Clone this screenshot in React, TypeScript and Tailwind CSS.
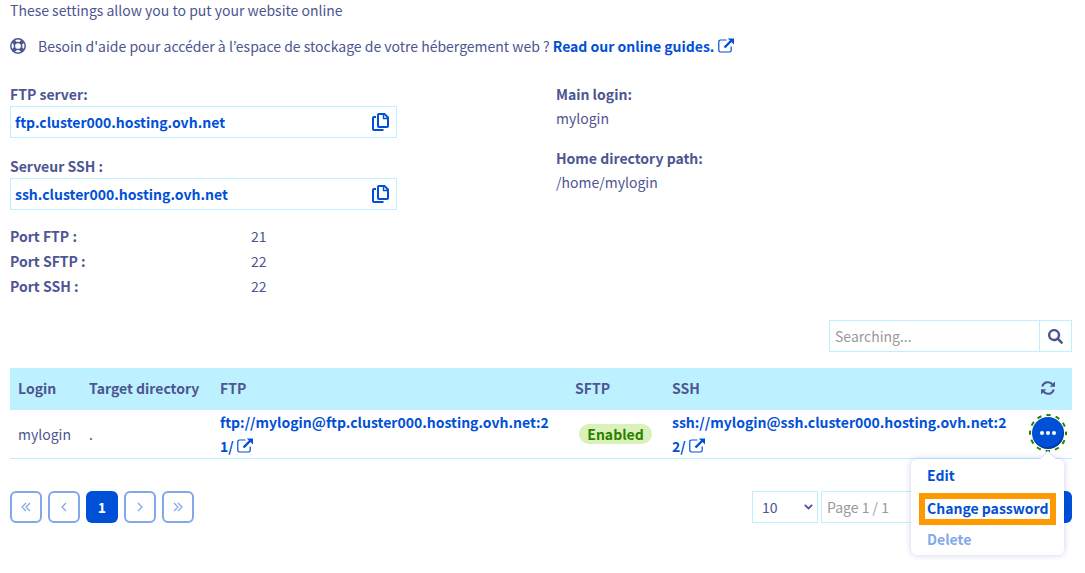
import React from 'react';
import { FaSearch } from 'react-icons/fa';

const ports = [
  { label: 'Port FTP :', value: '21' },
  { label: 'Port SFTP :', value: '22' },
  { label: 'Port SSH :', value: '22' },
];

function HelpIcon() {
  return (
    <svg className="h-4 w-4 shrink-0" viewBox="0 0 16 16" fill="none" stroke="currentColor" aria-hidden="true">
      <circle cx="8" cy="8" r="7.2" strokeWidth="1.5" />
      <circle cx="8" cy="8" r="3.6" strokeWidth="1.5" />
      <path d="M3 3l2.6 2.6M13 3l-2.6 2.6M3 13l2.6-2.6M13 13l-2.6-2.6" strokeWidth="4" />
    </svg>
  );
}

function ExternalIcon() {
  return (
    <svg className="inline-block h-4 w-4 align-[-2px]" viewBox="0 0 16 16" fill="none" stroke="currentColor" aria-hidden="true">
      <path d="M8.5 2H2.5A1.7 1.7 0 0 0 .8 3.7v8.6A1.7 1.7 0 0 0 2.5 14h9a1.7 1.7 0 0 0 1.7-1.7V8.5" strokeWidth="1.2" />
      <path d="M6.5 9.5L13 3" strokeWidth="2.4" />
      <path d="M9.8 0.4H16v6.2z" fill="currentColor" stroke="none" />
    </svg>
  );
}

function CopyIcon() {
  return (
    <svg className="h-[18px] w-[17px]" viewBox="0 0 17 18" fill="none" stroke="currentColor" strokeWidth="2" aria-hidden="true">
      <path d="M6 2a1 1 0 0 1 1-1h5.5L16 4.5V13a1 1 0 0 1-1 1H7a1 1 0 0 1-1-1z" />
      <path d="M11.5 1v4.5H16" strokeWidth="1.4" />
      <path d="M4 4H2a1 1 0 0 0-1 1v11a1 1 0 0 0 1 1h9.5" />
    </svg>
  );
}

function RefreshIcon() {
  return (
    <svg className="h-[14px] w-[14px]" viewBox="0 0 14 14" fill="none" stroke="currentColor" strokeWidth="2" aria-hidden="true">
      <path d="M1.3 5.6A5.8 5.8 0 0 1 11.6 3.6" />
      <path d="M12.7 8.4A5.8 5.8 0 0 1 2.4 10.4" />
      <path d="M14 .5v5.3H8.7zM0 13.5V8.2h5.3z" fill="currentColor" stroke="none" />
    </svg>
  );
}

function CopyField({ id, label, value }: { id: string; label: string; value: string }) {
  return (
    <div className="w-3/4">
      <label htmlFor={id} className="block font-bold">{label}</label>
      <div className="flex h-8 items-center border border-[#bef1ff]">
        <input id={id} readOnly value={value} className="min-w-0 flex-1 pl-1 font-bold text-[#0050d7] outline-none" />
        <button type="button" aria-label="Copy" className="px-[7px] text-[#0050d7]">
          <CopyIcon />
        </button>
      </div>
    </div>
  );
}

function PageButton({ label, path }: { label: string; path: string }) {
  return (
    <button type="button" aria-label={label} className="flex h-8 w-8 items-center justify-center rounded-md border-2 border-[#80a8eb] text-[#80a8eb]">
      <svg className="h-3 w-3" viewBox="0 0 12 12" fill="none" stroke="currentColor" strokeWidth="1.3" aria-hidden="true">
        <path d={path} />
      </svg>
    </button>
  );
}

function ActionsMenu() {
  return (
    <div className="relative mx-auto h-8 w-8">
      <button type="button" aria-label="Actions" className="flex h-8 w-8 items-center justify-center rounded-full bg-[#0050d7] shadow-[inset_-1px_-2px_1px_#00185e66]">
        <svg className="h-1 w-4" viewBox="0 0 16 4" fill="white" aria-hidden="true">
          <circle cx="2" cy="2" r="2" />
          <circle cx="8" cy="2" r="2" />
          <circle cx="14" cy="2" r="2" />
        </svg>
      </button>
      <svg className="pointer-events-none absolute -inset-[3px] h-[38px] w-[38px]" viewBox="0 0 38 38" fill="none" aria-hidden="true">
        <circle cx="19" cy="19" r="18" stroke="#2b8000" strokeWidth="2" strokeDasharray="4.4 5.025" strokeDashoffset="2.2" />
      </svg>
      <div className="absolute top-[42px] right-0 z-10 w-[153px] rounded-md bg-white font-bold text-[#0050d7] shadow-[0_0_6px_#000e9c33]">
        <svg className="absolute -top-2 right-2 h-2 w-4" viewBox="0 0 16 8" aria-hidden="true">
          <path d="M0 8L8 0l8 8z" fill="white" />
          <path d="M0 8L8 0l8 8" fill="none" stroke="#d9dbf0" strokeWidth="1" />
        </svg>
        <button type="button" className="mb-[2px] block h-8 w-full px-4 text-left">Edit</button>
        <button type="button" className="mx-2 flex h-8 w-[137px] items-center border-[6px] border-[#ff9900] px-[2px] pb-[2px] text-left whitespace-nowrap">Change password</button>
        <button type="button" disabled className="block h-[30px] w-full px-4 pb-[2px] text-left text-[#80a8eb]">Delete</button>
      </div>
    </div>
  );
}

function App() {
  return (
    <main className="bg-white pr-[13px] pl-[10px] pb-12 font-['Noto_Sans_CJK_KR','Noto_Sans_CJK_JP',sans-serif] text-[14px] leading-6 text-[#4d5592]">
      <p className="leading-5">These settings allow you to put your website online</p>

      <p className="mt-[14px] flex items-center gap-3">
        <HelpIcon />
        <span>
          Besoin d'aide pour accéder à l’espace de stockage de votre hébergement web ?{' '}
          <a href="#guides" className="font-bold text-[#0050d7]">Read our online guides. <ExternalIcon /></a>
        </span>
      </p>

      <div className="mt-6 grid grid-cols-2 gap-[30px]">
        <div>
          <div className="space-y-4">
            <CopyField id="ftp-server" label="FTP server:" value="ftp.cluster000.hosting.ovh.net" />
            <CopyField id="ssh-server" label="Serveur SSH :" value="ssh.cluster000.hosting.ovh.net" />
          </div>
          <dl className="mt-[14px] leading-[25px]">
            {ports.map((port) => (
              <div key={port.label} className="flex">
                <dt className="w-[241px] font-bold">{port.label}</dt>
                <dd>{port.value}</dd>
              </div>
            ))}
          </dl>
        </div>
        <dl>
          <dt className="font-bold">Main login:</dt>
          <dd>mylogin</dd>
          <dt className="mt-4 font-bold">Home directory path:</dt>
          <dd>/home/mylogin</dd>
        </dl>
      </div>

      <form className="mt-[21px] ml-auto flex h-8 w-[243px] border border-[#bef1ff]">
        <input type="search" aria-label="Search" placeholder="Searching..." className="min-w-0 flex-1 pl-[5px] outline-none placeholder:text-[#999999]" />
        <button type="submit" aria-label="Search" className="flex w-8 items-center justify-center border-l border-[#bef1ff]">
          <FaSearch size={15} />
        </button>
      </form>

      <table className="mt-4 w-full table-fixed border-separate border-spacing-0 text-left">
        <thead>
          <tr className="h-[42px] bg-[#bef1ff] [&>th]:pb-[2px]">
            <th className="w-[71px] px-2">Login</th>
            <th className="w-[131px] px-2 whitespace-nowrap">Target directory</th>
            <th className="w-[355px] px-2">FTP</th>
            <th className="w-[97px] px-2">SFTP</th>
            <th className="px-2">SSH</th>
            <th className="w-12">
              <button type="button" aria-label="Refresh" className="mx-auto block"><RefreshIcon /></button>
            </th>
          </tr>
        </thead>
        <tbody>
          <tr className="h-[49px] shadow-[inset_0_-1px_#bef1ff] [&>td]:pb-px">
            <td className="px-2">mylogin</td>
            <td className="px-2">.</td>
            <td className="px-2 font-bold break-all text-[#0050d7]">
              <a href="#ftp">ftp://mylogin@ftp.cluster000.hosting.ovh.net:21/ <ExternalIcon /></a>
            </td>
            <td className="px-2 text-center">
              <span className="inline-block rounded-full bg-[#daf1b9] px-2 leading-5 font-bold text-[#2b8000]">Enabled</span>
            </td>
            <td className="px-2 font-bold break-all text-[#0050d7]">
              <a href="#ssh">ssh://mylogin@ssh.cluster000.hosting.ovh.net:22/ <ExternalIcon /></a>
            </td>
            <td className="align-top pt-[7px]"><ActionsMenu /></td>
          </tr>
        </tbody>
      </table>

      <div className="mt-8 flex justify-between">
        <nav aria-label="Pagination" className="flex gap-[6px]">
          <PageButton label="First page" path="M6 2L2 6l4 4M10 2L6 6l4 4" />
          <PageButton label="Previous page" path="M8 2L4 6l4 4" />
          <button type="button" aria-current="page" className="h-8 w-8 rounded-md bg-[#0050d7] font-bold text-white">1</button>
          <PageButton label="Next page" path="M4 2l4 4-4 4" />
          <PageButton label="Last page" path="M2 2l4 4-4 4M6 2l4 4-4 4" />
        </nav>
        <div className="flex">
          <div className="relative mr-[3px]">
            <select aria-label="Rows per page" defaultValue="10" className="h-8 w-[66px] appearance-none border border-[#bef1ff] pl-[9px]">
              <option>10</option>
              <option>25</option>
              <option>50</option>
            </select>
            <svg className="pointer-events-none absolute top-[13px] right-[5px] h-[6px] w-[9px]" viewBox="0 0 9 6" fill="none" stroke="currentColor" strokeWidth="1.8" aria-hidden="true">
              <path d="M.8 .8l3.7 3.7L8.2 .8" />
            </svg>
          </div>
          <input aria-label="Page" placeholder="Page 1 / 1" className="h-8 w-[219px] border border-[#bef1ff] pl-[5px] placeholder:text-[#999999]" />
          <button type="button" aria-label="Go to page" className="h-8 w-8 rounded-r-md bg-[#0050d7]" />
        </div>
      </div>
    </main>
  );
}

export default App;
